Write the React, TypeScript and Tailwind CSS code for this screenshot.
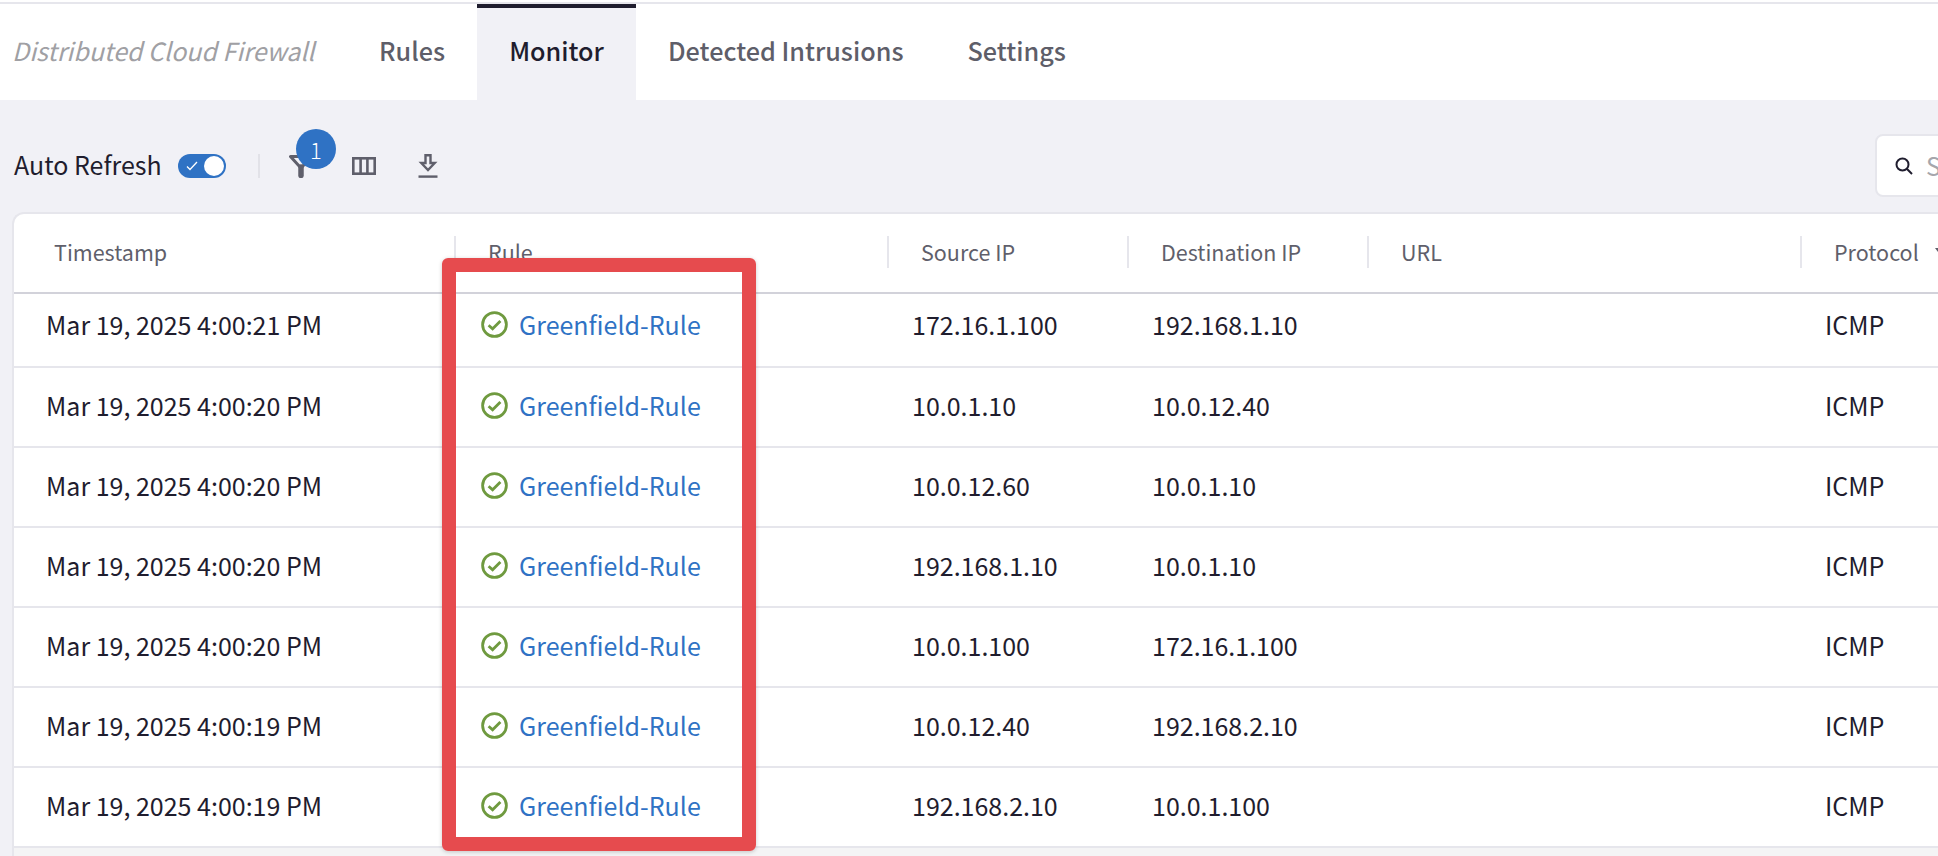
const rows = [
  ["Mar 19, 2025 4:00:21 PM", "172.16.1.100", "192.168.1.10"],
  ["Mar 19, 2025 4:00:20 PM", "10.0.1.10", "10.0.12.40"],
  ["Mar 19, 2025 4:00:20 PM", "10.0.12.60", "10.0.1.10"],
  ["Mar 19, 2025 4:00:20 PM", "192.168.1.10", "10.0.1.10"],
  ["Mar 19, 2025 4:00:20 PM", "10.0.1.100", "172.16.1.100"],
  ["Mar 19, 2025 4:00:19 PM", "10.0.12.40", "192.168.2.10"],
  ["Mar 19, 2025 4:00:19 PM", "192.168.2.10", "10.0.1.100"],
];

const gridCols = "grid grid-cols-[440px_433px_240px_240px_433px_1fr]";

function Check() {
  return (
    <svg width="27" height="27" viewBox="0 0 27 27" fill="none" className="shrink-0">
      <circle cx="13.5" cy="13.5" r="11.9" stroke="#6f9a3f" strokeWidth="2.8" />
      <path d="M7.6 14.2l4 3.6 7.8-7.8" stroke="#6f9a3f" strokeWidth="2.8" />
    </svg>
  );
}

function Head({ label, first, children }: { label: string; first?: boolean; children?: React.ReactNode }) {
  return (
    <div className={`flex h-8 items-center text-[21.5px] text-[#5f5f6b] ${first ? "pl-[40px]" : "border-l-2 border-[#e6e6ec] pl-8"}`}>
      {label}
      {children}
    </div>
  );
}

export default function App() {
  return (
    <div className="relative h-[856px] w-[1938px] overflow-hidden bg-[#f1f1f6] font-['Noto_Sans_CJK_SC','Liberation_Sans',sans-serif]">
      <div className="h-[2px] bg-white" />
      <div className="h-[2px] bg-[#e6e6ec]" />
      <header className="flex h-[96px] items-stretch bg-white">
        <div className="flex w-[347px] items-center pb-[2px] pl-3 text-[25px] italic text-[#a0a0a4]">Distributed Cloud Firewall</div>
        <div className="flex w-[130px] items-center justify-center pb-[3px] text-[25.2px] font-medium text-[#5e5e69]">Rules</div>
        <div className="flex w-[159px] items-center justify-center border-t-4 border-[#1f1d2e] bg-[#f1f1f6] pb-[7px] text-[25.2px] font-medium text-[#1f1d2e]">Monitor</div>
        <div className="flex items-center justify-center px-8 pb-[3px] text-[25.2px] font-medium text-[#5e5e69]">Detected Intrusions</div>
        <div className="flex items-center justify-center pb-[3px] pl-8 pr-8 text-[25.2px] font-medium text-[#5e5e69]">Settings</div>
      </header>

      <div className="relative flex h-[112px] items-start">
        <div className="mt-[49px] flex h-[34px] items-center pl-[14px]">
          <span className="w-[164px] pb-[2px] text-[25px] text-[#1f1d2e]">Auto Refresh</span>
          <div className="flex h-6 w-12 items-center justify-between rounded-full bg-[#2f72c4] pl-[8px] pr-[2px]">
            <svg width="12" height="10" viewBox="0 0 12 10" fill="none">
              <path d="M1 5.5l3 3 7-7.5" stroke="#fff" strokeWidth="1.3" />
            </svg>
            <span className="h-5 w-5 rounded-full bg-white" />
          </div>
          <span className="ml-8 h-6 w-[2px] bg-[#e2e2e8]" />
          <div className="relative ml-[29px] flex h-6 w-6 items-center justify-center">
            <svg width="24" height="24" viewBox="0 0 24 24" fill="none" stroke="#5f5f6b">
              <path d="M1.5 2.5h21L13 13H11z" strokeWidth="3" strokeLinejoin="round" />
              <path d="M12 13v8.5" strokeWidth="5.5" strokeLinecap="round" />
            </svg>
            <span className="absolute left-[7px] top-[-25px] flex h-10 w-10 items-center justify-center rounded-full bg-[#2f72c4] text-[22px] font-light text-white">1</span>
          </div>
          <svg width="24" height="18" viewBox="0 0 24 18" fill="none" stroke="#5f5f6b" strokeWidth="2.6" className="ml-[39px]">
            <rect x="1.3" y="1.3" width="21.4" height="15.4" />
            <path d="M8.6 1v16M15.4 1v16" />
          </svg>
          <svg width="20" height="24" viewBox="0 0 20 24" fill="none" stroke="#5f5f6b" strokeWidth="2.4" className="ml-[42px]">
            <path d="M7.5 1.2h5V9h4.2L10 16 3.3 9h4.2z" />
            <path d="M0.5 22.6h19" />
          </svg>
        </div>
        <div className="absolute left-[1875px] top-[34px] flex h-[63px] w-[200px] items-center rounded-lg border-2 border-[#e6e6ec] bg-white pl-[18px]">
          <svg width="18" height="18" viewBox="0 0 18 18" fill="none" stroke="#1f1d2e" strokeWidth="2">
            <circle cx="7.5" cy="7.5" r="6" />
            <path d="M11.8 11.8l5.2 5.2" />
          </svg>
          <span className="ml-[13px] text-[25px] text-[#a6a6ac]">Search</span>
        </div>
      </div>

      <div className="ml-3 w-[2000px] rounded-tl-xl border-l-2 border-t-2 border-[#e6e6ec] bg-white">
        <div className={`${gridCols} h-[80px] items-center border-b-2 border-[#d2d2da] pb-[2px]`}>
          <Head label="Timestamp" first />
          <Head label="Rule" />
          <Head label="Source IP" />
          <Head label="Destination IP" />
          <Head label="URL" />
          <Head label="Protocol">
            <svg width="12" height="8" viewBox="0 0 12 8" className="ml-[16px]" fill="#5f5f6b">
              <path d="M0 0h12L6 8z" />
            </svg>
          </Head>
        </div>
        {rows.map((r, i) => (
          <div key={i} className={`${gridCols} ${i === 0 ? "h-[74px] pb-[11px]" : "h-[80px] pb-[3px]"} items-center border-b-2 border-[#e6e6ec] text-[25px] text-[#1f1d2e]`}>
            <div className="pl-8">{r[0]}</div>
            <div className="flex items-center gap-[11px] pl-[27px] text-[#2f72c4]">
              <Check />
              <span>Greenfield-Rule</span>
            </div>
            <div className="pl-[25px]">{r[1]}</div>
            <div className="pl-[25px]">{r[2]}</div>
            <div />
            <div className="pl-[25px]">ICMP</div>
          </div>
        ))}
        <div className="h-10 bg-[#f4f4f5]" />
      </div>

      <div className="pointer-events-none absolute left-[442px] top-[258px] h-[593px] w-[314px] rounded-md border-[14px] border-[#e64b4e] shadow-[0_1px_4px_rgba(0,0,0,0.2)]" />
    </div>
  );
}
